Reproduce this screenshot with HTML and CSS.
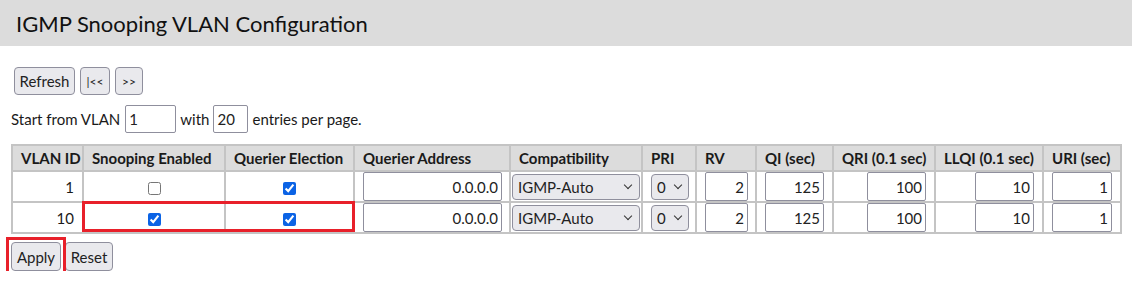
FILE: index.html
```html
<!DOCTYPE html>
<html>
<head>
<meta charset="utf-8">
<link rel="stylesheet" href="styles.css">
</head>
<body>
<div class="titlebar"><h1 class="title">IGMP Snooping VLAN Configuration</h1></div>
<div class="content">
  <div class="toolbar">
    <button class="btn btn-refresh">Refresh</button>
    <button class="btn btn-small btn-first">|&lt;&lt;</button>
    <button class="btn btn-small btn-next">&gt;&gt;</button>
  </div>
  <div class="startline">
    <span>Start from VLAN</span>
    <input class="txt txt-start" type="text" value="1">
    <span>with</span>
    <input class="txt txt-count" type="text" value="20">
    <span>entries per page.</span>
  </div>
  <div class="tablewrap">
    <table class="cfg">
      <colgroup>
        <col class="c-vid"><col class="c-snoop"><col class="c-qe"><col class="c-qa"><col class="c-comp"><col class="c-pri"><col class="c-rv"><col class="c-qi"><col class="c-qri"><col class="c-llqi"><col class="c-uri">
      </colgroup>
      <thead>
        <tr>
          <th>VLAN ID</th><th>Snooping Enabled</th><th>Querier Election</th><th>Querier Address</th><th>Compatibility</th><th>PRI</th><th>RV</th><th>QI (sec)</th><th>QRI (0.1 sec)</th><th>LLQI (0.1 sec)</th><th>URI (sec)</th>
        </tr>
      </thead>
      <tbody>
        <tr>
          <td class="num">1</td>
          <td class="ctr"><input type="checkbox" class="chk"></td>
          <td class="ctr"><input type="checkbox" class="chk" checked></td>
          <td class="num"><input class="txt cell-in in-qa" type="text" value="0.0.0.0"></td>
          <td class="sel"><span class="select sel-comp">IGMP-Auto<span class="chev"></span></span></td>
          <td class="sel"><span class="select sel-pri">0<span class="chev"></span></span></td>
          <td class="num"><input class="txt cell-in in-rv" type="text" value="2"></td>
          <td class="num"><input class="txt cell-in in-59" type="text" value="125"></td>
          <td class="num"><input class="txt cell-in in-59" type="text" value="100"></td>
          <td class="num"><input class="txt cell-in in-59" type="text" value="10"></td>
          <td class="num"><input class="txt cell-in in-60" type="text" value="1"></td>
        </tr>
        <tr>
          <td class="num">10</td>
          <td class="ctr"><input type="checkbox" class="chk" checked></td>
          <td class="ctr"><input type="checkbox" class="chk" checked></td>
          <td class="num"><input class="txt cell-in in-qa" type="text" value="0.0.0.0"></td>
          <td class="sel"><span class="select sel-comp">IGMP-Auto<span class="chev"></span></span></td>
          <td class="sel"><span class="select sel-pri">0<span class="chev"></span></span></td>
          <td class="num"><input class="txt cell-in in-rv" type="text" value="2"></td>
          <td class="num"><input class="txt cell-in in-59" type="text" value="125"></td>
          <td class="num"><input class="txt cell-in in-59" type="text" value="100"></td>
          <td class="num"><input class="txt cell-in in-59" type="text" value="10"></td>
          <td class="num"><input class="txt cell-in in-60" type="text" value="1"></td>
        </tr>
      </tbody>
    </table>
    <div class="hl hl-row"></div>
  </div>
  <div class="actions">
    <span class="apply-wrap"><button class="btn btn-apply">Apply</button><span class="hl hl-apply"></span></span>
    <button class="btn btn-reset">Reset</button>
  </div>
</div>
</body>
</html>
```
FILE: styles.css
```css
html, body {
  margin: 0;
  padding: 0;
  background: #ffffff;
  font-family: "Lato", "Liberation Sans", sans-serif;
  color: #1a1a1a;
}
.titlebar {
  background: #dcdcdc;
  height: 46px;
  display: flex;
  align-items: center;
  padding-left: 16px;
}
.title {
  margin: 0;
  font-size: 22px;
  font-weight: 400;
  color: #111;
}
.content {
  padding-left: 11px;
}
.toolbar {
  display: flex;
  gap: 5px;
  margin-top: 21px;
  margin-left: 3px;
}
.btn {
  font-family: "Lato", "Liberation Sans", sans-serif;
  font-size: 15px;
  color: #222;
  background: #e9e9ed;
  border: 1px solid #8f8f9d;
  border-radius: 4px;
  height: 28px;
  padding: 0 4px;
  margin: 0;
  cursor: default;
}
.btn-refresh { width: 61px; }
.btn-small { font-size: 12px; padding: 0; }
.btn-first { width: 30px; }
.btn-next { width: 28px; }
.startline {
  display: flex;
  align-items: center;
  gap: 4px;
  margin-top: 10px;
  font-size: 15px;
}
.txt {
  font-family: "Lato", "Liberation Sans", sans-serif;
  font-size: 15px;
  color: #222;
  border: 1px solid #8f8f9d;
  border-radius: 2px;
  height: 28px;
  box-sizing: border-box;
  padding: 0 3px;
  margin: 0;
  background: #fff;
}
.txt-start { width: 51px; margin-left: 1px; }
.txt-count { width: 35px; }
.tablewrap {
  position: relative;
  margin-top: 11px;
  width: 1109px;
}
.cfg {
  border-collapse: collapse;
  table-layout: fixed;
  width: 1109px;
  font-size: 15px;
}
.c-vid { width: 71px; }
.c-snoop { width: 142px; }
.c-qe { width: 129px; }
.c-qa { width: 156px; }
.c-comp { width: 132px; }
.c-pri { width: 54px; }
.c-rv { width: 60px; }
.c-qi { width: 77px; }
.c-qri { width: 102px; }
.c-llqi { width: 108px; }
.c-uri { width: 78px; }
.cfg th {
  background: #dcdcdc;
  border: 2px solid #c4c4c4;
  height: 26px;
  padding: 0 8px;
  text-align: left;
  font-weight: 700;
  white-space: nowrap;
  box-sizing: border-box;
}
.cfg td {
  border: 2px solid #c4c4c4;
  height: 30px;
  padding: 0 8px;
  box-sizing: border-box;
  vertical-align: middle;
}
.cfg td.num { text-align: right; }
.cfg td.ctr { text-align: center; }
.cfg td.sel { padding: 0 0 0 1px; }
.chk {
  width: 13px;
  height: 13px;
  margin: 0;
  vertical-align: middle;
  accent-color: #0b63e5;
}
.cell-in {
  text-align: right;
  height: 29px;
  display: inline-block;
  vertical-align: middle;
}
.in-qa { width: 139px; }
.in-rv { width: 43px; }
.in-59 { width: 59px; }
.in-60 { width: 60px; }
.select {
  display: inline-flex;
  align-items: center;
  justify-content: space-between;
  box-sizing: border-box;
  height: 26px;
  border: 1px solid #8f8f9d;
  border-radius: 4px;
  background: #e9e9ed;
  padding: 0 8px 0 5px;
  font-size: 15px;
  color: #222;
  vertical-align: middle;
}
.sel-comp { width: 128px; }
.sel-pri { width: 38px; margin-left: 7px; padding-right: 7px; }
.chev {
  width: 5px;
  height: 5px;
  border-right: 1.5px solid #333;
  border-bottom: 1.5px solid #333;
  transform: rotate(45deg);
  margin-top: -3px;
}
.hl {
  position: absolute;
  border: 3px solid #e8202a;
  box-sizing: border-box;
  pointer-events: none;
}
.hl-row {
  left: 71px;
  top: 57px;
  width: 273px;
  height: 31px;
}
.actions {
  display: flex;
  gap: 4px;
  margin-top: 8px;
}
.apply-wrap { position: relative; display: inline-block; height: 29px; }
.btn-apply { width: 50px; height: 29px; display: block; }
.btn-reset { width: 48px; height: 29px; }
.hl-apply {
  left: -5px;
  top: -5px;
  width: 60px;
  height: 39px;
}
```
